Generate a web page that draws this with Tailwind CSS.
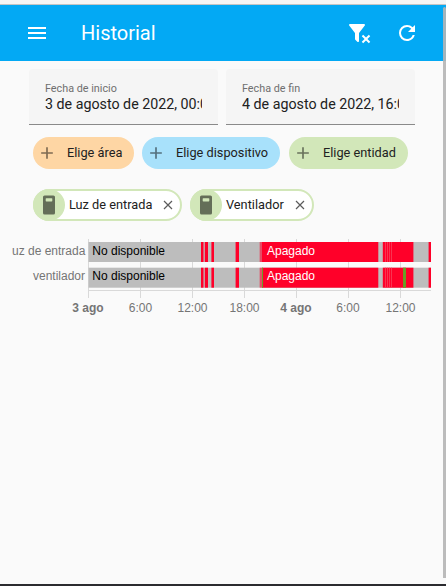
<!DOCTYPE html>
<html lang="es">
<head>
<meta charset="utf-8">
<title>Historial</title>
<script src="https://cdn.jsdelivr.net/npm/@tailwindcss/browser@4"></script>
</head>
<body class="relative h-[586px] w-[446px] overflow-hidden bg-[#fafafa] font-[Roboto,sans-serif] text-[#212121]">
<div class="flex h-full flex-col">
  <div class="h-[5px] shrink-0 border-b border-[#c4c4c4] bg-[#f5f5f5]"></div>
  <header class="flex h-14 shrink-0 items-center bg-[#03a9f4] pr-[27px] pl-[25px] text-white">
    <svg class="size-6" viewBox="0 0 24 24" fill="currentColor"><path d="M3 6h18v2H3zM3 11h18v2H3zM3 16h18v2H3z"/></svg>
    <h1 class="ml-8 flex-1 text-[20px] leading-7">Historial</h1>
    <svg class="size-6" viewBox="0 0 24 24" fill="currentColor"><path d="M14.76 20.83 17.6 18l-2.84-2.83 1.41-1.41L19 16.57l2.83-2.81 1.41 1.41L20.43 18l2.81 2.83-1.41 1.41L19 19.4l-2.83 2.84-1.41-1.41M12 12v7.88c.04.3-.06.62-.29.83a.996.996 0 0 1-1.41 0L8.29 18.7a.989.989 0 0 1-.29-.83V12h-.03L2.21 4.62a1 1 0 0 1 .17-1.4c.19-.14.4-.22.62-.22h14c.22 0 .43.08.62.22a1 1 0 0 1 .17 1.4L12.03 12H12Z"/></svg>
    <svg class="ml-6 size-6" viewBox="0 0 24 24" fill="currentColor"><path d="M17.65 6.35A7.958 7.958 0 0 0 12 4a8 8 0 0 0-8 8 8 8 0 0 0 8 8c3.73 0 6.84-2.55 7.73-6h-2.08A5.99 5.99 0 0 1 12 18a6 6 0 0 1-6-6 6 6 0 0 1 6-6c1.66 0 3.14.69 4.22 1.78L13 11h7V4l-2.35 2.35Z"/></svg>
  </header>

  <main>
    <div class="flex gap-2 pt-2 pl-[29px]">
      <div class="h-14 w-[189px] rounded-t border-b border-[#8a8a8a] bg-[#f5f5f5] px-4 pt-[13px]">
        <div class="text-[10.8px] leading-[14px] text-[#6f6f6f]">Fecha de inicio</div>
        <div class="overflow-hidden text-[14.25px] leading-[16px] whitespace-nowrap">3 de agosto de 2022, 00:00</div>
      </div>
      <div class="h-14 w-[189px] rounded-t border-b border-[#8a8a8a] bg-[#f5f5f5] px-4 pt-[13px]">
        <div class="text-[10.8px] leading-[14px] text-[#6f6f6f]">Fecha de fin</div>
        <div class="overflow-hidden text-[14.25px] leading-[16px] whitespace-nowrap">4 de agosto de 2022, 16:00</div>
      </div>
    </div>

    <div class="flex pt-3 pl-[33px] text-[12.75px] whitespace-nowrap">
      <div class="flex h-8 w-[101px] items-center rounded-full bg-[#fed6a4] pl-[4px]">
        <svg class="size-5 text-[#7f6b52]" viewBox="0 0 24 24" fill="currentColor"><path d="M19 13h-6v6h-2v-6H5v-2h6V5h2v6h6v2Z"/></svg>
        <span class="ml-[10px] leading-5">Elige área</span>
      </div>
      <div class="ml-2 flex h-8 w-[138px] items-center rounded-full bg-[#a8e1fb] pl-[4px]">
        <svg class="size-5 text-[#54707d]" viewBox="0 0 24 24" fill="currentColor"><path d="M19 13h-6v6h-2v-6H5v-2h6V5h2v6h6v2Z"/></svg>
        <span class="ml-[10px] leading-5">Elige dispositivo</span>
      </div>
      <div class="ml-[9px] flex h-8 w-[119px] items-center rounded-full bg-[#d2e7b9] pl-[4px]">
        <svg class="size-5 text-[#69735c]" viewBox="0 0 24 24" fill="currentColor"><path d="M19 13h-6v6h-2v-6H5v-2h6V5h2v6h6v2Z"/></svg>
        <span class="ml-[10px] leading-5">Elige entidad</span>
      </div>
    </div>

    <div class="flex gap-2 pt-5 pl-[33px] text-[12.75px] whitespace-nowrap">
      <div class="flex h-8 w-[149px] items-center rounded-full border-2 border-[#d2e7b9] bg-white">
        <div class="-ml-0.5 flex size-8 shrink-0 items-center justify-center rounded-full bg-[#d2e7b9]">
          <svg class="h-5 w-3" viewBox="0 0 12 20"><rect y=".5" width="12" height="19" rx="1.6" fill="#646e58"/><rect x="2.7" y="3.2" width="6.6" height="3.2" rx=".6" fill="#d2e7b9"/></svg>
        </div>
        <span class="ml-1 flex-1 leading-5">Luz de entrada</span>
        <svg class="mr-[6px] size-3" viewBox="0 0 12 12" fill="none" stroke="#5c5c5c" stroke-width="1.2"><path d="m2 2 8 8M10 2l-8 8"/></svg>
      </div>
      <div class="flex h-8 w-[124px] items-center rounded-full border-2 border-[#d2e7b9] bg-white">
        <div class="-ml-0.5 flex size-8 shrink-0 items-center justify-center rounded-full bg-[#d2e7b9]">
          <svg class="h-5 w-3" viewBox="0 0 12 20"><rect y=".5" width="12" height="19" rx="1.6" fill="#646e58"/><rect x="2.7" y="3.2" width="6.6" height="3.2" rx=".6" fill="#d2e7b9"/></svg>
        </div>
        <span class="ml-1 flex-1 leading-5">Ventilador</span>
        <svg class="mr-[6px] size-3" viewBox="0 0 12 12" fill="none" stroke="#5c5c5c" stroke-width="1.2"><path d="m2 2 8 8M10 2l-8 8"/></svg>
      </div>
    </div>

    <!-- State timeline -->
    <svg class="mt-[9px] block h-[90px] w-[440px] font-['Liberation_Sans',sans-serif] text-[12px]" viewBox="0 230 440 90">
      <defs>
        <g id="states">
          <rect x="88.5" width="342.5" height="20" fill="#bdbdbd"/>
          <g fill="#ff0029">
            <rect x="201" width="2" height="20"/><rect x="203" width="1" height="20" opacity=".5"/>
            <rect x="204" width="1" height="20" opacity=".2"/><rect x="205" width="3" height="20"/>
            <rect x="211" width="1" height="20" opacity=".6"/><rect x="212" width="2" height="20"/>
            <rect x="235" width="1" height="20" opacity=".4"/><rect x="236" width="3" height="20"/>
            <rect x="259" width="1" height="20" opacity=".2"/><rect x="260" width="2" height="20" opacity=".6"/>
            <rect x="262" width="116" height="20"/><rect x="378" width="1" height="20" opacity=".3"/>
            <rect x="382" width="1" height="20" opacity=".2"/><rect x="383" width="30" height="20"/>
            <rect x="413" width="1" height="20" opacity=".4"/>
            <rect x="428" width="1" height="20" opacity=".4"/><rect x="429" width="2" height="20"/>
          </g>
          <path d="M385.5 0v20M387.5 0v20M389.5 0v20M391.5 0v20" stroke="#f8415c" stroke-width=".8"/>
        </g>
      </defs>
      <path d="M88.5 239v59M140.5 239v59M192.5 239v59M244.5 239v59M296.5 239v59M348.5 239v59M400.5 239v59M88 290.5h343" stroke="#d9d9d9"/>
      <use href="#states" y="242"/>
      <use href="#states" y="267.7"/>
      <rect x="262" y="267.7" width="1" height="20" fill="#689f26"/>
      <rect x="403" y="267.7" width="3" height="20" fill="#689f26"/>
      <g fill="#757575">
        <text x="12" y="255">uz de entrada</text>
        <text x="85" y="280" text-anchor="end">ventilador</text>
        <g text-anchor="middle">
          <text x="88" y="312" font-weight="bold">3 ago</text><text x="140.5" y="312">6:00</text>
          <text x="192.5" y="312">12:00</text><text x="244.5" y="312">18:00</text>
          <text x="296" y="312" font-weight="bold">4 ago</text><text x="348" y="312">6:00</text><text x="400.5" y="312">12:00</text>
        </g>
      </g>
      <text x="92.3" y="255">No disponible</text><text x="92.3" y="280">No disponible</text>
      <g fill="#fff"><text x="267" y="255">Apagado</text><text x="267" y="280">Apagado</text></g>
    </svg>
  </main>
  <div class="mt-auto h-0.5 shrink-0 bg-[#2b2b2f]"></div>
</div>
<div class="absolute top-[7px] right-0 h-[571px] w-[3px] rounded-t-sm bg-[#b5b5b5]/90"></div>
</body>
</html>
